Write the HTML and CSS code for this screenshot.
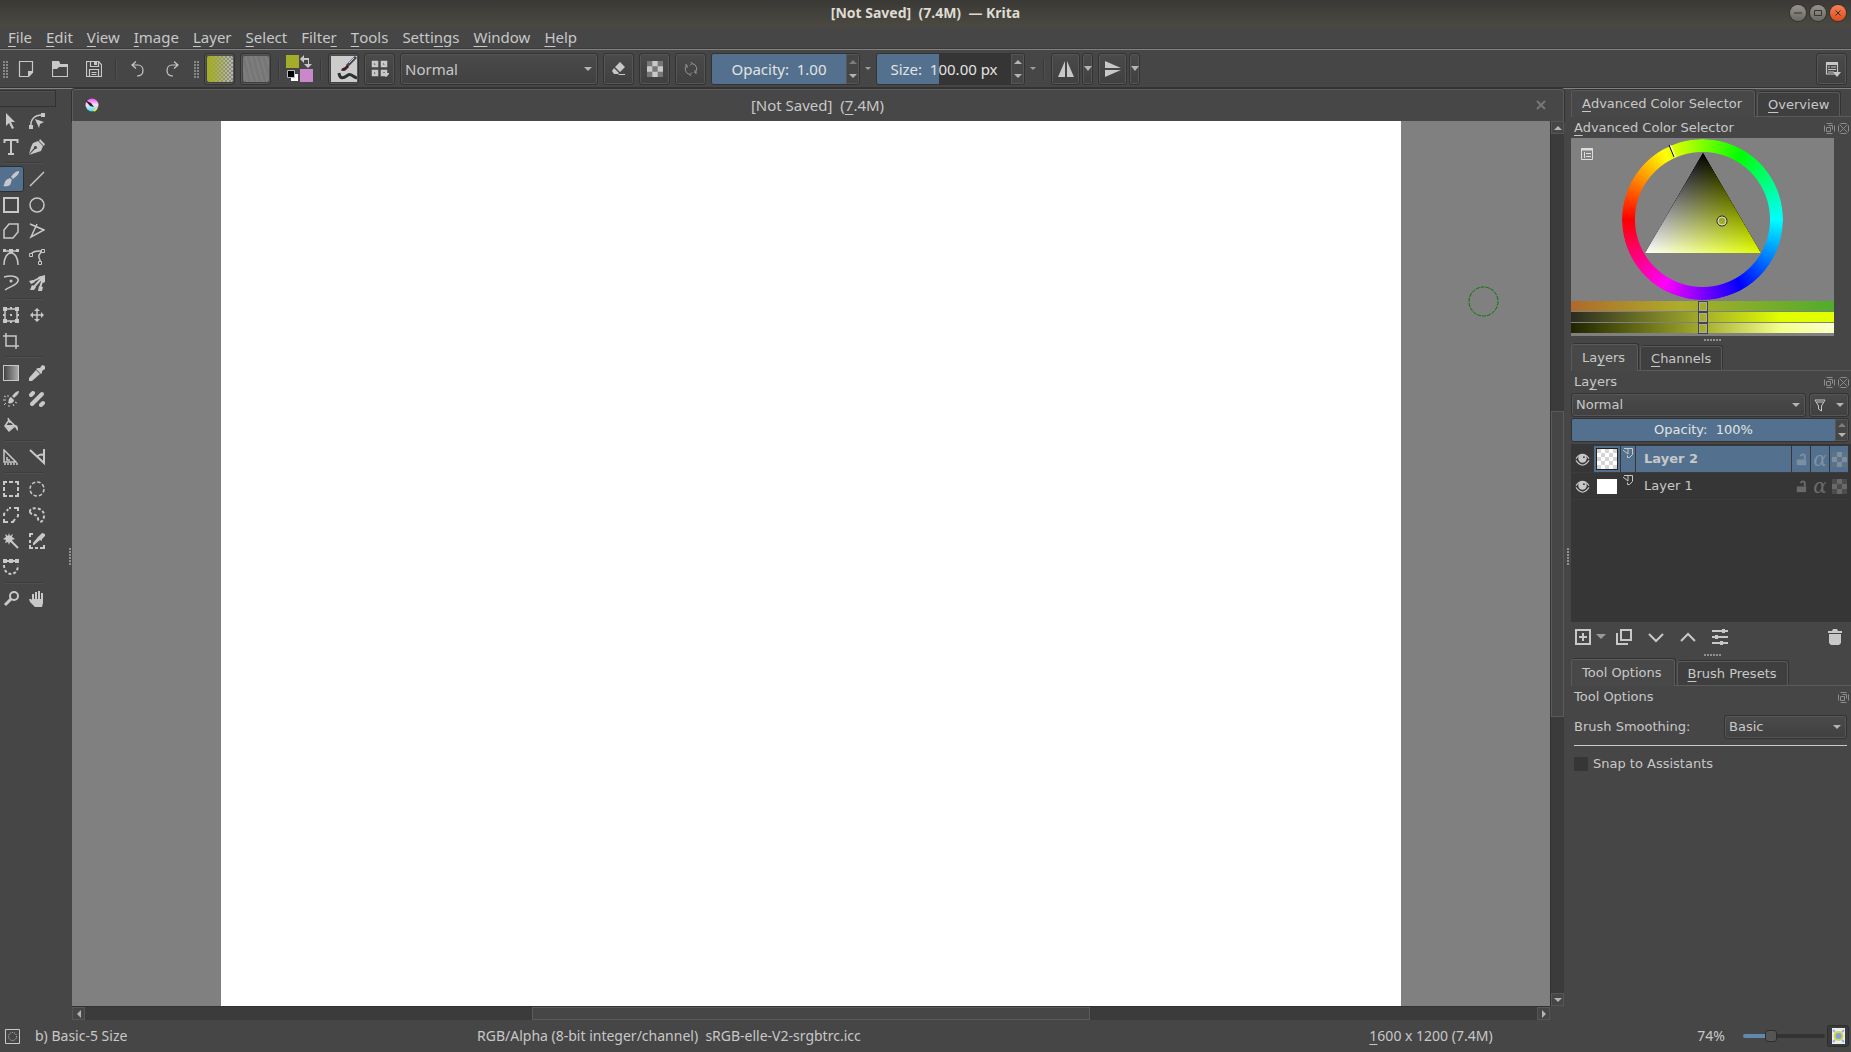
FILE: index.html
```
<!DOCTYPE html>
<html lang="en">
<head>
    <meta charset="UTF-8">
    <meta name="viewport" content="width=device-width, initial-scale=1.0">
    <title>Krita</title>
    <link rel="stylesheet" href="styles.css">
</head>
<body>
    <!-- shared icons -->
    <svg class="sprite">
        <symbol id="i-float" viewBox="0 0 11 11"><path d="M.5 2.500v6M10.500 2.500v6M2.500.5h6M2.500 10.500h6M4.500 2.500h4v4M2.500 4.500h4v4h-4z"/></symbol>
        <symbol id="i-close" viewBox="0 0 11 11"><path d="M.5 2.500v6M10.500 2.500v6M2.500.5h6M2.500 10.500h6M1.500 1.500l8 8M9.500 1.500l-8 8"/></symbol>
        <symbol id="i-eye" viewBox="0 0 16 16"><path d="M1 7Q8-2 15 7M1 9q7 10 14 0" stroke-width="1.200"/><circle class="fill" cx="8" cy="7" r="4.500"/><circle cx="9.500" cy="5.500" r="1" fill="#363636" stroke="none"/></symbol>
        <symbol id="i-paint" viewBox="0 0 12 12"><path d="M2 1.500h8.500v6l-3 3H5.500v-2M1 3l5 4V2" stroke-width="1"/></symbol>
        <symbol id="i-lock" viewBox="0 0 16 16"><path class="fill" d="M3 8h10v6H3z"/><path d="M11.500 8V4.500a2 2 0 0 0-4 0" stroke-width="2"/></symbol>
        <symbol id="i-check" viewBox="0 0 15 15"><path class="dim" d="M0 0h15v15H0z"/><path class="fill" d="M5 0h5v5H5zM0 5h5v5H0zM10 5h5v5h-5zM5 10h5v5H5z"/></symbol>
    </svg>

    <header class="titlebar">
        <span class="window-title">[Not Saved]&nbsp; (7.4M)&nbsp; — Krita</span>
        <div class="window-buttons">
            <button aria-label="Minimize"><svg viewBox="0 0 16 16"><path d="M4 8h8"/></svg></button>
            <button aria-label="Maximize"><svg viewBox="0 0 16 16"><path d="M4.500 5.500h7v5h-7z"/></svg></button>
            <button class="close" aria-label="Close"><svg viewBox="0 0 16 16"><path d="M5.500 5.500l5 5M10.500 5.500l-5 5"/></svg></button>
        </div>
    </header>

    <nav class="menubar">
        <button><u>F</u>ile</button>
        <button><u>E</u>dit</button>
        <button><u>V</u>iew</button>
        <button><u>I</u>mage</button>
        <button><u>L</u>ayer</button>
        <button><u>S</u>elect</button>
        <button>Filte<u>r</u></button>
        <button><u>T</u>ools</button>
        <button>Setti<u>n</u>gs</button>
        <button><u>W</u>indow</button>
        <button><u>H</u>elp</button>
    </nav>

    <div class="toolbar">
        <div class="file-tools">
            <span class="handle"></span>
            <button class="flat" aria-label="New"><svg class="icon" viewBox="0 0 16 16"><path d="M1.500.5h13v11l-4 4h-9z" stroke-width="1.200"/><path class="fill" d="M15 10v1l-5 5v-6z"/></svg></button>
            <button class="flat" aria-label="Open"><svg class="icon" viewBox="0 0 16 16"><path d="M.5 15.500V.5h6l1 3h8v12z" stroke-width="1.200"/><path class="fill" d="M0 0h7l1 3h8v3H7L5 8H0z"/></svg></button>
            <button class="flat" aria-label="Save"><svg class="icon" viewBox="0 0 16 16"><path d="M.5.5h12l3 3v12H.5zM3.500 15.500V8.500h9v7M5.500 11.500h5M5.500 13.500h5" stroke-width="1.200"/><path d="M4.500.5v5h8v-5" stroke-width="1.200"/><path class="fill" d="M8 1h3v3H8z"/></svg></button>
            <span class="sep"></span>
            <button class="flat" aria-label="Undo"><svg class="icon" viewBox="0 0 16 16"><path d="M6 .5L2 4l4 3.500M2 4h6c3 0 5 2.500 5 5.500s-2 5.500-6 5.500" stroke-width="1.200"/></svg></button>
            <button class="flat" aria-label="Redo"><svg class="icon" viewBox="0 0 16 16"><path d="M10 .5L14 4l-4 3.500M14 4H8c-3 0-5 2.500-5 5.500S5 15 9 15" stroke-width="1.200"/></svg></button>
        </div>
        <div class="brush-tools">
            <span class="handle"></span>
            <button class="tool-btn" aria-label="Gradients"><span class="gradient-preview"></span></button>
            <button class="tool-btn" aria-label="Patterns"><span class="pattern-preview"></span></button>
            <span class="sep"></span>
            <svg class="swatches" viewBox="0 0 27 28">
                <path fill="#a4ad2b" d="M0 0h13v13H0z"/>
                <path fill="#ca87cc" d="M14 14h13v13H14z"/>
                <path class="fill" d="M14 4l4-4v3h5v6h3l-4 4-4-4h4V5h-4v3z"/>
                <path fill="#fff" d="M5 19h7v7H5z"/>
                <path fill="#000" stroke="#bbb" d="M1.500 15.500h7v7h-7z"/>
            </svg>
            <span class="sep"></span>
            <button class="tool-btn" aria-label="Edit brush settings">
                <svg class="brush-preview" viewBox="0 0 26 26"><path fill="#ccc" stroke="none" d="M0 0h26v26H0z"/><path d="M8 17c1 8 6 4 9 2s5 2 9 3" stroke="#2b3030" stroke-width="3" fill="none"/><path d="M25 1L16 10" stroke="#4a4350" stroke-width="3"/><path d="M23 2L18 7" stroke="#d9c9e9" stroke-width="1"/><path d="M16 9l2 2-3 3c-2 2-4 0-5 1 1-4 3-3 4-4z" fill="#412024" stroke="none"/></svg>
            </button>
            <button class="tool-btn" aria-label="Choose brush preset">
                <svg class="icon-lg" viewBox="0 0 18 18"><path d="M2 2h4v4H2zM11 2h4v4h-4zM2 11h4v4H2zM11 11h4v4h-4z" stroke-width="2.500"/><path class="fill" d="M4 3h2L4 5zM13 3h2l-2 2zM4 12h2l-2 2zM10 13h9l-4 4z"/></svg>
            </button>
            <span class="select blend"><select aria-label="Blending mode"><option>Normal</option></select></span>
            <button class="tool-btn" aria-label="Eraser mode"><svg class="icon" viewBox="0 0 16 16"><path class="fill" d="M9 1l5 5-5 5-5-5zM3 7l5 5-1 1H3L1 10zM8 13h6v1H7z"/></svg></button>
            <button class="tool-btn" aria-label="Preserve alpha"><svg class="icon"><use href="#i-check"/></svg></button>
            <button class="tool-btn" aria-label="Reload preset"><svg class="icon muted" viewBox="0 0 16 16"><path d="M9 2.500a5.500 5.500 0 0 1 3 9.500M7 13.500A5.500 5.500 0 0 1 4 4M8 1l1 1.500-2 2M8 15l-1-1.500 2-2M12 9v3h2M4 7V4H2" stroke-width="1"/></svg></button>
            <div class="spin">
                <label class="slider">
                    <input type="range" min="0" max="100" value="100" style="--value: 100%">
                    <span>Opacity:&nbsp; 1.00</span>
                </label>
                <div class="arrows"><button class="off" aria-label="Increase opacity"></button><button aria-label="Decrease opacity"></button></div>
            </div>
            <button class="more" aria-label="Opacity options"></button>
            <div class="spin">
                <label class="slider">
                    <input type="range" min="0" max="100" value="46" style="--value: 46%">
                    <span>Size:&nbsp; 100.00 px</span>
                </label>
                <div class="arrows"><button aria-label="Increase size"></button><button aria-label="Decrease size"></button></div>
            </div>
            <button class="more" aria-label="Size options"></button>
            <span class="sep"></span>
            <div class="mirror">
                <button class="tool-btn" aria-label="Horizontal mirror"><svg class="icon" viewBox="0 0 16 16"><path class="fill" d="M7 0v16H0zM9 0v16h7z"/></svg></button>
                <button class="drop" aria-label="Horizontal mirror options"></button>
            </div>
            <div class="mirror">
                <button class="tool-btn" aria-label="Vertical mirror"><svg class="icon" viewBox="0 0 16 16"><path class="fill" d="M0 0l16 7H0zM0 9h16L0 16z"/></svg></button>
                <button class="drop" aria-label="Vertical mirror options"></button>
            </div>
        </div>
        <button class="tool-btn workspace" aria-label="Choose workspace"><svg class="icon-lg" viewBox="0 0 18 18"><path d="M3.500 4v10h11V4M5 7h2M8 7h5M5 9.500h8M5 12h6" stroke-width="1.200"/><path class="fill" d="M3 2h12v3H3zM10 12h8l-4 5z"/></svg></button>
    </div>

    <main class="workspace-area">
        <aside class="toolbox">
            <div class="toolbox-head"></div>
            <div class="tool-group">
                <button aria-label="Select shapes"><svg class="icon" viewBox="0 0 16 16"><path class="fill" d="M3 0v13l3-3 3 6 2-1-3-6h4z"/></svg></button>
                <button aria-label="Edit shapes"><svg class="icon" viewBox="0 0 16 16"><path d="M2 14C1 6 6 2 13 2"/><path class="fill" d="M12 0h4v4h-4zM0 12h4v4H0zM6 6l9 3-4 2-1 4z"/></svg></button>
                <button aria-label="Text"><svg class="icon" viewBox="0 0 16 16"><path d="M1.500 4V1h13v3M8 1v14M5 15h6" stroke-width="2"/></svg></button>
                <button aria-label="Calligraphy"><svg class="icon" viewBox="0 0 16 16"><path class="fill" d="M9 2l5 5-2 5-6 2-6 2 6-6a1.500 1.500 0 1 0-1-1l-5 6 2-7 2-4zM11 0l5 5-1 2-5-5z"/></svg></button>
            </div>
            <div class="tool-group">
                <button class="active" aria-label="Freehand brush"><svg class="icon" viewBox="0 0 16 16"><path class="fill" d="M16 0c1 2-3 6-6 8L8 6c2-3 5-6 8-6zM7 7l2 2-1 2-3-3zM5 8l3 3c0 4-4 5-8 4 2-1 1-6 5-7z"/></svg></button>
                <button aria-label="Line"><svg class="icon" viewBox="0 0 16 16"><path d="M1 15L15 1"/></svg></button>
                <button aria-label="Rectangle"><svg class="icon" viewBox="0 0 16 16"><path d="M1 1h14v14H1z" stroke-width="2"/></svg></button>
                <button aria-label="Ellipse"><svg class="icon" viewBox="0 0 16 16"><circle cx="8" cy="8" r="7"/></svg></button>
                <button aria-label="Polygon"><svg class="icon" viewBox="0 0 16 16"><path d="M6 1h9v8l-5 6H1V7z"/></svg></button>
                <button aria-label="Polyline"><svg class="icon" viewBox="0 0 16 16"><path d="M1 1l14 6L2 14 8 1"/></svg></button>
                <button aria-label="Bezier curve"><svg class="icon" viewBox="0 0 16 16"><path d="M1 16C1 0 15 0 15 16M1 2h14"/><path class="fill" d="M6 0h4v4H6zM0 0h3v3H0zM13 0h3v3h-3z"/></svg></button>
                <button aria-label="Freehand path"><svg class="icon" viewBox="0 0 16 16"><path d="M2 5C5 1 9 2 13 2L10 6c-1 4 2 4 1 7"/><path class="box" d="M12.500.5h3v3h-3zM.5 4.500h3v3h-3zM9.500 12.500h3v3h-3z"/></svg></button>
                <button aria-label="Dynamic brush"><svg class="icon" viewBox="0 0 16 16"><path d="M1 2c10-3 15 1 14 4-1 4-7 5-13 9"/><circle class="fill" cx="8" cy="6" r="1.500"/></svg></button>
                <button aria-label="Multibrush"><svg class="icon" viewBox="0 0 16 16"><path d="M3 7l9-5M4 13l9-10M11 13l3-10" stroke-width="2"/><path class="fill" d="M9 2l7-2v7l-2 1zM0 6l4-1 2 2-4 2zM1 15l2-5 4 2-2 3zM9 16l1-5 4 1-1 4z"/></svg></button>
            </div>
            <div class="tool-group">
                <button aria-label="Transform"><svg class="icon" viewBox="0 0 16 16"><path d="M2 2h12v12H2z"/><path class="fill" d="M0 0h4v4H0zM12 0h4v4h-4zM0 12h4v4H0zM12 12h4v4h-4zM7 0h2v2H7zM7 14h2v2H7zM0 7h2v2H0zM14 7h2v2h-2zM7 7h2v2H7z"/></svg></button>
                <button aria-label="Move"><svg class="icon" viewBox="0 0 16 16"><path d="M8 2v12M2 8h12"/><path class="fill" d="M8 1l3 3H5zM8 15l-3-3h6zM1 8l3-3v6zM15 8l-3 3V5z"/></svg></button>
                <button aria-label="Crop"><svg class="icon" viewBox="0 0 16 16"><path d="M3 0v13h13M0 3h13v13"/></svg></button>
            </div>
            <div class="tool-group">
                <button aria-label="Gradient"><span class="gradient-icon"></span></button>
                <button aria-label="Color picker"><svg class="icon" viewBox="0 0 16 16"><path class="fill" d="M9 3l2 0 2-3 3 1 0 3-3 2v2l-1 1-5-5zM7 5l4 4-8 7H0v-3z"/></svg></button>
                <button aria-label="Colorize mask"><svg class="icon" viewBox="0 0 16 16"><path class="fill" d="M16 0c0 3-3 5-5 7L9 5c2-2 4-5 7-5zM8 6l3 3c0 3-4 4-6 3 1-1 0-5 3-6z"/><path d="M1 5l2 1M0 9h3M1 14l2-2M6 14v2M10 13l1 2M12 11l2 1M5 4v2" stroke-width="1"/></svg></button>
                <button aria-label="Smart patch"><svg class="icon" viewBox="0 0 16 16"><path d="M3 13L13 3" stroke-width="4" stroke-linecap="round"/><path d="M2 4l2-2M12 14l2-2" stroke-width="4" stroke-linecap="round"/></svg></button>
                <button aria-label="Fill"><svg class="icon" viewBox="0 0 16 16"><path d="M6 3l6 6-6 5-4-5zM5 1l2 5"/><path class="fill" d="M2 8h10l-6 6zM12 8c3 0 3 3 3 6-2-1-2-3-3-4z"/></svg></button>
            </div>
            <div class="tool-group">
                <button aria-label="Assistants"><svg class="icon" viewBox="0 0 16 16"><path d="M1 1v12h12zM4 8v3h3"/><path d="M1 15h15" stroke-dasharray="2 1"/></svg></button>
                <button aria-label="Measure"><svg class="icon" viewBox="0 0 16 16"><path d="M1 1l14 13V0M8 8c1-2 4-3 7-2" stroke-width="2"/></svg></button>
            </div>
            <div class="tool-group">
                <button aria-label="Rectangular selection"><svg class="icon" viewBox="0 0 16 16"><path d="M1 4V1h3M12 1h3v3M15 12v3h-3M4 15H1v-3M6 1h4M6 15h4M1 6v4M15 6v4" stroke-width="2"/></svg></button>
                <button aria-label="Elliptical selection"><svg class="icon" viewBox="0 0 16 16"><circle cx="8" cy="8" r="7" stroke-dasharray="3.500 2"/></svg></button>
                <button aria-label="Polygonal selection"><svg class="icon" viewBox="0 0 16 16"><path d="M6 1h2M11 1h4v3M15 7v2l-1 1M12 12l-2 3H8M5 15H1v-3M1 9V7l1-1M4 4l1-2" stroke-width="2"/></svg></button>
                <button aria-label="Freehand selection"><svg class="icon" viewBox="0 0 16 16"><path d="M1 5c-1-6 14-5 14 3 0 8-5 8-6 4C9 6 2 9 1 5z" stroke-width="2" stroke-dasharray="3 2"/></svg></button>
                <button aria-label="Contiguous selection"><svg class="icon" viewBox="0 0 16 16"><path d="M7 7l8 8" stroke-width="2"/><path class="fill" d="M6 0l1 3 3-2-1 3 3 2-3 1 1 3-3-1-1 3-1-3-3 1 1-3-3-1 3-2-1-3 3 2z"/></svg></button>
                <button aria-label="Similar color selection"><svg class="icon" viewBox="0 0 16 16"><path d="M1 4V1h3M1 7v3M1 12v3h3M6 15h3M11 15h4v-3" stroke-width="2"/><path class="fill" d="M10 3l3-3 3 1v2l-3 3v2l-2-1-6 5H4v-2l5-6z"/></svg></button>
                <button aria-label="Bezier selection"><svg class="icon" viewBox="0 0 16 16"><path d="M1 6c0 12 14 12 14 0" stroke-width="2" stroke-dasharray="3 2"/><path d="M1 2h14" stroke-width="2"/><path class="fill" d="M0 0h4v4H0zM6 0h4v4H6zM12 0h4v4h-4z"/></svg></button>
            </div>
            <div class="tool-group">
                <button aria-label="Zoom"><svg class="icon" viewBox="0 0 16 16"><circle cx="11" cy="5" r="4" stroke-width="2"/><path d="M8 8l-6 6" stroke-width="3"/></svg></button>
                <button aria-label="Pan"><svg class="icon" viewBox="0 0 16 16"><path class="fill" d="M3 9V3h2v5h1V1h2v7h1V0h2v8h1V2h2v10l-1 4H6l-5-5-1-3h2z"/></svg></button>
            </div>
        </aside>
        <div class="splitter"></div>

        <section class="document">
            <div class="doc-tab">
                <svg class="krita-logo" viewBox="0 0 14 14"><defs><linearGradient id="logo" x1="0" y1="0" x2="0" y2="1"><stop offset="0" stop-color="#f94df4"/><stop offset=".5" stop-color="#f6e4f6"/><stop offset="1" stop-color="#35dff5"/></linearGradient></defs><circle cx="7" cy="7" r="6.500" fill="url(#logo)"/><path d="M0 2l6 3 3 4-4-1z" fill="#26202c"/><path d="M12 10l-3 3" stroke="#f3e843" stroke-width="2"/></svg>
                <span class="doc-name">[Not Saved]&nbsp; (<u>7</u>.4M)</span>
                <button class="doc-close" aria-label="Close document"><svg viewBox="0 0 10 10"><path d="M1 1l8 8M9 1L1 9"/></svg></button>
            </div>
            <div class="doc-view">
                <div class="canvas">
                    <div class="paper"></div>
                    <svg class="brush-outline" viewBox="0 0 31 31"><circle cx="15.500" cy="15.500" r="14.500" stroke-dasharray="4 1"/></svg>
                </div>
                <div class="scroll vertical"><span class="step up"></span><span class="track"><span class="thumb"></span></span><span class="step down"></span></div>
            </div>
            <div class="scroll horizontal"><span class="step left"></span><span class="track"><span class="thumb"></span></span><span class="step right"></span></div>
        </section>
        <div class="splitter right"></div>

        <aside class="docks">
            <section class="dock">
                <div class="tabs"><button class="current"><u>A</u>dvanced Color Selector</button><button><u>O</u>verview</button></div>
                <div class="dock-title"><span><u>A</u>dvanced Color Selector</span><button aria-label="Float"><svg><use href="#i-float"/></svg></button><button aria-label="Close"><svg><use href="#i-close"/></svg></button></div>
                <div class="color-panel">
                    <div class="wheel-area">
                        <div class="wheel"></div>
                        <svg class="triangle" viewBox="0 0 263 163">
                            <defs>
                                <linearGradient id="white" gradientUnits="userSpaceOnUse" x1="74" y1="115" x2="160.500" y2="65"><stop offset="0" stop-color="#fff"/><stop offset="1" stop-color="#000"/></linearGradient>
                                <linearGradient id="hue" gradientUnits="userSpaceOnUse" x1="190" y1="115" x2="103.500" y2="65"><stop offset="0" stop-color="#e1ff00"/><stop offset="1" stop-color="#000"/></linearGradient>
                            </defs>
                            <g class="mix">
                                <path fill="url(#white)" d="M132 15L74 115h116z"/>
                                <path class="add" fill="url(#hue)" d="M132 15L74 115h116z"/>
                            </g>
                            <path d="M98 7l5 12" stroke="#000"/><path d="M99.500 7l5 12" stroke="#fff"/>
                            <circle cx="151" cy="83" r="5" fill="none" stroke="#222"/><circle cx="151" cy="83" r="4" fill="none" stroke="#ddd"/>
                            <path d="M10.500 10.500h11v11h-11zM13.500 14v6M15 15.500h5M15 18.500h5" fill="none" stroke="#ddd" stroke-width="1"/><path d="M10 11.500h12" stroke="#ddd" stroke-width="2"/>
                        </svg>
                    </div>
                    <input class="bar hue" type="range" aria-label="Hue">
                    <input class="bar saturation" type="range" aria-label="Saturation">
                    <input class="bar value" type="range" aria-label="Value">
                </div>
            </section>
            <div class="grip"></div>

            <section class="dock">
                <div class="tabs"><button class="current">La<u>y</u>ers</button><button><u>C</u>hannels</button></div>
                <div class="dock-title"><span>La<u>y</u>ers</span><button aria-label="Float"><svg><use href="#i-float"/></svg></button><button aria-label="Close"><svg><use href="#i-close"/></svg></button></div>
                <div class="layer-modes">
                    <span class="select"><select aria-label="Layer blending mode"><option>Normal</option></select></span>
                    <button class="filter" aria-label="Filter layers"><svg viewBox="0 0 12 13"><path d="M1 1h10L7.500 7v5l-3-2V7zM3 3h6"/></svg></button>
                </div>
                <div class="spin small">
                    <label class="slider">
                        <input type="range" min="0" max="100" value="100" style="--value: 100%">
                        <span>Opacity:&nbsp; 100%</span>
                    </label>
                    <div class="arrows"><button class="off" aria-label="Increase layer opacity"></button><button aria-label="Decrease layer opacity"></button></div>
                </div>
                <div class="layer-list">
                    <div class="layer selected">
                        <span class="eye"><svg><use href="#i-eye"/></svg></span>
                        <span class="cell thumbnail"><i class="checker"></i></span>
                        <span class="cell type"><svg><use href="#i-paint"/></svg></span>
                        <span class="cell name">Layer 2</span>
                        <span class="cell prop"><svg><use href="#i-lock"/></svg></span>
                        <span class="cell prop alpha">α</span>
                        <span class="cell prop"><svg><use href="#i-check"/></svg></span>
                    </div>
                    <div class="layer">
                        <span class="eye"><svg><use href="#i-eye"/></svg></span>
                        <span class="cell thumbnail"><i></i></span>
                        <span class="cell type"><svg><use href="#i-paint"/></svg></span>
                        <span class="cell name">Layer 1</span>
                        <span class="cell prop"><svg><use href="#i-lock"/></svg></span>
                        <span class="cell prop alpha">α</span>
                        <span class="cell prop"><svg><use href="#i-check"/></svg></span>
                    </div>
                </div>
                <div class="layer-actions">
                    <button class="add-layer" aria-label="Add layer"><svg class="icon" viewBox="0 0 16 16"><path d="M1 1h14v14H1zM8 4v8M4 8h8" stroke-width="2"/></svg></button>
                    <button aria-label="Duplicate layer"><svg class="icon" viewBox="0 0 16 16"><path d="M5 1h10v10H5zM1 4v11h11" stroke-width="2"/></svg></button>
                    <button aria-label="Move layer down"><svg class="icon" viewBox="0 0 16 16"><path d="M1 5l7 7 7-7" stroke-width="2"/></svg></button>
                    <button aria-label="Move layer up"><svg class="icon" viewBox="0 0 16 16"><path d="M1 12l7-7 7 7" stroke-width="2"/></svg></button>
                    <button aria-label="Layer properties"><svg class="icon" viewBox="0 0 16 16"><path d="M0 2h16M0 8h16M0 14h16" stroke-width="2"/><path class="fill" d="M10 0h3v4h-3zM3 6h3v4H3zM8 12h3v4H8z"/></svg></button>
                    <button class="delete" aria-label="Delete layer"><svg class="icon" viewBox="0 0 16 16"><path class="fill" d="M1 2h4l1-2h4l1 2h4v2H1zM2 5h12v9l-2 2H4l-2-2z"/></svg></button>
                </div>
            </section>
            <div class="grip"></div>

            <section class="dock">
                <div class="tabs"><button class="current">Tool Options</button><button><u>B</u>rush Presets</button></div>
                <div class="dock-title"><span>Tool Options</span><button aria-label="Float"><svg><use href="#i-float"/></svg></button></div>
                <div class="tool-options">
                    <div class="smoothing">
                        <label for="smoothing">Brush Smoothing:</label>
                        <span class="select"><select id="smoothing"><option>Basic</option></select></span>
                    </div>
                    <label class="snap"><input type="checkbox">Snap to Assistants</label>
                </div>
            </section>
        </aside>
    </main>

    <footer class="statusbar">
        <svg class="selection-icon" viewBox="0 0 15 15"><path d="M.5.5h14v14H.5z" stroke-width="1"/><circle cx="7.500" cy="7.500" r="4" stroke-width="1" stroke-dasharray="1 1"/></svg>
        <span class="preset">b) Basic-5 Size</span>
        <span class="profile">RGB/Alpha (8-bit integer/channel)&nbsp; sRGB-elle-V2-srgbtrc.icc</span>
        <span class="doc-size"><u>1</u>600 x 1200 (7.4M)</span>
        <label class="zoom" for="zoom">74%</label>
        <input id="zoom" class="zoom-slider" type="range" min="0" max="100" value="32">
        <button class="fit" aria-label="Canvas pixel size"><svg viewBox="0 0 13 16"><path fill="#eee" stroke="none" d="M0 0h13v16H0z"/><circle cx="6.500" cy="8" r="4" fill="#7ca4dc" stroke="#d8d34b" stroke-width="2"/><path d="M1 2l2 2M12 2l-2 2M1 14l2-2M12 14l-2-2" stroke="#8fb5e8" stroke-width="2"/></svg></button>
    </footer>
</body>
</html>
```

FILE: styles.css
```
* {
    box-sizing: border-box;
}

body {
    margin: 0;
    height: 100vh;
    display: flex;
    flex-direction: column;
    overflow: hidden;
    background: #464646;
    color: #c8c8c8;
    font: 15px/20px "Noto Sans", sans-serif;
}

button {
    border: 0;
    padding: 0;
    background: none;
    color: inherit;
    font: inherit;
    display: flex;
    align-items: center;
    justify-content: center;
}

input {
    margin: 0;
}

u {
    text-underline-offset: 3px;
    text-decoration-thickness: 1px;
}

svg {
    display: block;
    fill: none;
    stroke: #c8c8c8;
    flex: none;
}

.fill {
    fill: #c8c8c8;
    stroke: none;
}

.dim {
    fill: #777;
    stroke: none;
}

.box {
    fill: #464646;
    stroke-width: 1;
}

.sprite {
    display: none;
}

.icon {
    width: 16px;
    height: 16px;
    stroke-width: 1.5;
}

.icon-lg {
    width: 18px;
    height: 18px;
}

.muted {
    opacity: 0.6;
}

/* title and menu */
.titlebar {
    position: relative;
    height: 27px;
    flex: none;
    display: flex;
    align-items: center;
    justify-content: center;
    padding-bottom: 2px;
    background: linear-gradient(#3a3935, #4b4942);
    color: #dfdbd2;
    font-size: 14px;
    font-weight: bold;
}

.window-buttons {
    position: absolute;
    right: 5px;
    top: 5px;
    display: flex;
    gap: 4px;
}

.window-buttons button {
    width: 16px;
    height: 16px;
    border-radius: 50%;
    background: linear-gradient(#95938b, #6b6963);
    box-shadow: 0 0 0 1px #34332f;
}

.window-buttons .close {
    background: linear-gradient(#f58156, #e04c1a);
}

.window-buttons svg {
    width: 16px;
    height: 16px;
    stroke: #34332f;
}

.menubar {
    height: 23px;
    flex: none;
    display: flex;
    gap: 14px;
    padding: 0 0 2px 8px;
    border-bottom: 1px solid #828282;
    box-shadow: inset 0 -1px #3a3a3a;
}

/* toolbar */
.toolbar {
    height: 39px;
    flex: none;
    display: flex;
    align-items: center;
    padding: 0 4px 1px 3px;
    border-bottom: 1px solid #828282;
    box-shadow: inset 0 -1px #333;
}

.file-tools,
.brush-tools {
    display: flex;
    align-items: center;
}

.file-tools .handle {
    margin-right: 1px;
}

.brush-tools {
    gap: 5px;
    margin-left: 5px;
}

.handle {
    width: 5px;
    height: 18px;
    background: linear-gradient(#464646 1px, transparent 1px) 0 0 / 5px 3px, linear-gradient(90deg, #888 2px, transparent 2px) 0 0 / 3px 3px;
}

.flat {
    width: 34px;
    height: 32px;
}

.sep {
    width: 5px;
    height: 20px;
    background: linear-gradient(90deg, #393939 1px, #505050 1px) center / 2px 20px no-repeat;
}

.file-tools .sep {
    width: 10px;
}

.tool-btn,
.drop {
    width: 31px;
    height: 32px;
    border: 1px solid #333;
    border-radius: 3px;
    box-shadow: inset 0 0 0 1px #565656;
    background: linear-gradient(#4a4a4a, #404040);
}

.gradient-preview,
.pattern-preview {
    width: 26px;
    height: 26px;
    border-radius: 2px;
    background: linear-gradient(90deg, #a4ad2b 10%, #a4ad2b00), repeating-conic-gradient(#888 0 25%, #bbb 0 50%) 0 0 / 4px 4px;
}

.pattern-preview {
    background: repeating-linear-gradient(75deg, #777 0 3px, #7e7e7e 3px 5px);
}

.swatches {
    width: 27px;
    height: 28px;
    stroke: none;
}

.brush-preview {
    width: 26px;
    height: 26px;
}

.select {
    position: relative;
    display: block;
}

.select select {
    appearance: none;
    display: block;
    width: 100%;
    height: 24px;
    padding: 0 4px;
    border: 1px solid #333;
    border-radius: 3px;
    background: linear-gradient(#4b4b4b, #404040);
    box-shadow: inset 0 0 0 1px #565656;
    color: inherit;
    font: inherit;
}

.select::after,
.filter::after,
.add-layer::after {
    content: "";
    border: 4px solid transparent;
    border-top-color: #b4b4b4;
    border-bottom: 0;
}

.select::after {
    position: absolute;
    right: 6px;
    top: 50%;
    margin-top: -2px;
}

.select.blend {
    width: 198px;
}

.blend select {
    height: 32px;
}

.spin {
    display: flex;
    width: 149px;
    height: 32px;
    border: 1px solid #333;
    border-radius: 3px;
    overflow: hidden;
}

.slider {
    position: relative;
    flex: 1;
    display: flex;
    color: #e3e3e3;
}

.slider input {
    appearance: none;
    width: 100%;
    height: 100%;
    background: linear-gradient(90deg, #53718e var(--value), #353535 var(--value));
}

.slider input::-webkit-slider-thumb {
    appearance: none;
    width: 0;
}

.slider span {
    position: absolute;
    inset: 0;
    display: flex;
    align-items: center;
    justify-content: center;
}

.arrows {
    width: 13px;
    display: flex;
    flex-direction: column;
    border: 1px solid #565656;
}

.arrows button {
    flex: 1;
}

.arrows button::before,
.more::before,
.drop::before {
    content: "";
    border: 4px solid transparent;
    border-top-color: #b4b4b4;
    border-bottom: 0;
}

.arrows button:first-child::before {
    transform: rotate(180deg);
}

.arrows .off::before {
    opacity: 0.5;
}

.more {
    width: 6px;
}

.more::before {
    border-width: 3px 3px 0;
    opacity: 0.8;
}

.mirror {
    display: flex;
    gap: 2px;
}

.mirror .tool-btn {
    width: 29px;
}

.drop {
    width: 11px;
}

.drop::before {
    border-width: 5px 4px 0;
}

.workspace {
    margin-left: auto;
}

/* toolbox */
.workspace-area {
    flex: 1;
    min-height: 0;
    display: flex;
}

.toolbox {
    width: 56px;
    padding-top: 1px;
}

.toolbox-head {
    height: 17px;
    margin-bottom: 1px;
    border: 1px solid #323232;
    border-left: 0;
    box-shadow: inset 0 1px #505050;
}

.tool-group {
    display: flex;
    flex-wrap: wrap;
    width: 52px;
    margin-left: -2px;
    margin-bottom: 6px;
    position: relative;
}

.tool-group + .tool-group::before {
    content: "";
    position: absolute;
    left: 6px;
    right: 6px;
    top: -4px;
    height: 2px;
    background: linear-gradient(#3d3d3d 1px, #4f4f4f 1px);
}

.tool-group button {
    width: 26px;
    height: 26px;
}

.tool-group .active {
    border: 1px solid #2f2f2f;
    border-radius: 3px;
    background: #53718e;
}

.gradient-icon {
    width: 16px;
    height: 16px;
    border: 1px solid #c8c8c8;
    background: linear-gradient(90deg, #444, #aaa);
}

.splitter {
    width: 16px;
    display: flex;
    align-items: center;
    justify-content: flex-end;
}

.splitter.right {
    width: 7px;
}

.splitter::after {
    content: "";
    width: 2px;
    height: 18px;
    margin: 4px 1px 0 0;
    background: linear-gradient(#909090 66%, #464646 66%) 0 0 / 2px 3px;
}

.splitter.right::after {
    margin-right: 2px;
}

/* document */
.document {
    flex: 1;
    min-width: 0;
    display: flex;
    flex-direction: column;
}

.doc-tab {
    height: 32px;
    flex: none;
    display: flex;
    align-items: center;
    padding: 0 17px 1px 12px;
    border: 1px solid #5c5c5c;
    border-bottom: 0;
    border-radius: 3px 3px 0 0;
    box-shadow: 0 0 0 1px #323232;
    background: #474747;
}

.krita-logo {
    width: 14px;
    height: 14px;
    stroke: none;
}

.doc-name {
    flex: 1;
    text-align: center;
}

.doc-close svg {
    width: 10px;
    height: 10px;
    stroke: #777;
    stroke-width: 2;
}

.doc-view {
    flex: 1;
    min-height: 0;
    display: flex;
    position: relative;
}

.canvas {
    flex: 1;
    position: relative;
    padding: 0 149px;
    background: #808080;
}

.paper {
    height: 100%;
    background: #fff;
}

.brush-outline {
    position: absolute;
    right: 51px;
    top: 165px;
    width: 31px;
    height: 31px;
    stroke: #007800;
}

.scroll {
    display: flex;
    background: #3b3b3b;
}

.scroll.vertical {
    width: 14px;
    flex-direction: column;
    border-left: 1px solid #323232;
}

.scroll.horizontal {
    height: 14px;
    flex: none;
    margin-right: 14px;
    border-top: 1px solid #323232;
}

.step {
    width: 13px;
    height: 13px;
    border: 1px solid #565656;
    background: #464646;
    display: flex;
    align-items: center;
    justify-content: center;
}

.step::before {
    content: "";
    border: 4px solid transparent;
    border-bottom-color: #b4b4b4;
    border-top: 0;
}

.step.down::before {
    transform: rotate(180deg);
}

.step.left::before {
    transform: rotate(-90deg);
}

.step.right::before {
    transform: rotate(90deg);
}

.track {
    flex: 1;
    display: flex;
}

.thumb {
    border: 1px solid #5a5a5a;
    background: #464646;
}

.vertical .track {
    flex-direction: column;
}

.vertical .thumb {
    margin-top: 277px;
    height: 306px;
}

.horizontal .thumb {
    flex: 1;
    margin: 0 447px;
}

/* docks */
.docks {
    width: 280px;
    flex: none;
    font: 13px/20px "DejaVu Sans", sans-serif;
    padding-top: 1px;
}

.tabs {
    display: flex;
    align-items: flex-end;
    height: 27px;
    border-bottom: 1px solid #5a5a5a;
}

.tabs button {
    height: 24px;
    padding: 0 10px;
    border: 1px solid #5a5a5a;
    border-bottom: 0;
    border-radius: 3px 3px 0 0;
    background: #3f3f3f;
    box-shadow: 1px -1px #333;
}

.tabs .current {
    height: 27px;
    padding-right: 12px;
    margin: 0 2px -1px 0;
    background: #484848;
}

.dock-title {
    display: flex;
    align-items: center;
    gap: 3px;
    height: 21px;
    padding: 1px 2px 0 3px;
}

.dock-title span {
    flex: 1;
}

.dock-title svg {
    width: 11px;
    height: 11px;
    stroke: #8c8c8c;
}

.color-panel {
    width: 263px;
    padding-bottom: 3px;
    background: #808080;
}

.wheel-area {
    position: relative;
    height: 163px;
}

.wheel {
    position: absolute;
    left: 51px;
    top: 1px;
    width: 161px;
    height: 161px;
    border-radius: 50%;
    background: conic-gradient(from 270deg, red, yellow, lime, cyan, blue, magenta, red);
    mask: radial-gradient(circle, transparent 67px, #000 68px);
}

.triangle {
    position: absolute;
    inset: 0;
    width: 263px;
    height: 163px;
    stroke: none;
}

.mix {
    isolation: isolate;
}

.add {
    mix-blend-mode: plus-lighter;
}

.bar {
    appearance: none;
    display: block;
    width: 100%;
    height: 10px;
    margin-bottom: 1px;
}

.bar:last-child {
    margin-bottom: 0;
}

.bar::-webkit-slider-thumb {
    appearance: none;
    width: 10px;
    height: 11px;
    border: 1px solid #444;
    outline: 1px solid #aaa;
    outline-offset: -2px;
}

.bar.hue {
    background: linear-gradient(90deg, #ae6a2b, #adad2b 42%, #4fad2b);
}

.bar.saturation {
    background: linear-gradient(90deg, #2b2b20, #a4ad2b 50%, #e1ff00 80%);
}

.bar.value {
    background: linear-gradient(90deg, #1f2400, #a4ad2b 50%, #f3ff8c 80%, #faffc8);
}

.grip {
    width: 18px;
    height: 2px;
    margin: 3px auto 3px 133px;
    background: linear-gradient(90deg, #909090 66%, #464646 66%) 0 0 / 3px 2px;
}

.layer-modes {
    display: flex;
    gap: 3px;
    margin: 1px 2px 1px 0;
}

.layer-modes .select {
    flex: 1;
}

.filter {
    width: 40px;
    height: 24px;
    border: 1px solid #333;
    border-radius: 3px;
    box-shadow: inset 0 0 0 1px #565656;
    background: linear-gradient(#4b4b4b, #404040);
    gap: 10px;
}

.filter svg {
    width: 12px;
    height: 13px;
}

.spin.small {
    width: auto;
    height: 24px;
    margin-right: 2px;
}

.layer-list {
    height: 178px;
    margin-top: 2px;
    padding: 2px 3px 0 1px;
    background: #363636;
}

.layer {
    display: flex;
    height: 27px;
    gap: 1px;
    border-bottom: 1px solid #3c3c3c;
}

.layer svg {
    width: 15px;
    height: 15px;
}

.eye,
.cell {
    display: flex;
    justify-content: center;
    align-items: center;
}

.eye {
    width: 21px;
}

.selected .cell {
    background: #53718e;
}

.thumbnail {
    width: 26px;
}

.thumbnail i {
    width: 20px;
    height: 15px;
    background: #fff;
}

.thumbnail .checker {
    width: 22px;
    height: 22px;
    border: 1px solid #222;
    background: repeating-conic-gradient(#fff 0 25%, #d5d5d5 0 50%) 0 0 / 8px 8px;
}

.cell.type {
    width: 14px;
    align-items: flex-start;
}

.type svg {
    width: 12px;
    height: 12px;
    margin-top: 1px;
}

.cell.name {
    flex: 1;
    justify-content: flex-start;
    padding-left: 8px;
}

.selected .name {
    font-weight: bold;
}

.prop {
    width: 18px;
    color: #c8c8c860;
    font: italic 20px/20px "DejaVu Serif", serif;
}

.prop svg {
    opacity: 0.35;
}

.layer-actions {
    display: flex;
    gap: 16px;
    height: 29px;
    padding: 0 8px 0 4px;
}

.add-layer {
    gap: 5px;
    margin-right: -6px;
}

.add-layer::after {
    border-width: 5px 5px 0;
    border-top-color: #999;
}

.delete {
    margin-left: auto;
}

.tool-options {
    padding: 8px 4px 0 3px;
}

.smoothing {
    display: flex;
    align-items: center;
    justify-content: space-between;
    padding-bottom: 6px;
    border-bottom: 1px solid #c8c8c8;
}

.smoothing .select {
    width: 123px;
}

.snap {
    display: flex;
    align-items: center;
    gap: 5px;
    margin-top: 8px;
}

.snap input {
    appearance: none;
    width: 14px;
    height: 14px;
    background: #363636;
}

/* status bar */
.statusbar {
    height: 32px;
    flex: none;
    display: flex;
    align-items: center;
    padding: 0 2px 0 5px;
    font-size: 14px;
}

.selection-icon {
    width: 15px;
    height: 15px;
}

.preset {
    width: 457px;
    padding-left: 15px;
}

.doc-size {
    margin-left: auto;
    width: 328px;
}

.profile {
    white-space: nowrap;
}

.zoom-slider {
    appearance: none;
    width: 82px;
    height: 4px;
    margin: 0 2px 0 18px;
    border-radius: 2px;
    background: linear-gradient(90deg, #6089ad 30%, #333 30%);
}

.zoom-slider::-webkit-slider-thumb {
    appearance: none;
    width: 12px;
    height: 12px;
    border: 1px solid #2d2d2d;
    border-radius: 3px;
    background: #555;
}

.fit {
    width: 22px;
    height: 22px;
    border: 1px solid #2d2d2d;
    border-radius: 3px;
    background: #3a3a3a;
}

.fit svg {
    width: 13px;
    height: 16px;
}
```
